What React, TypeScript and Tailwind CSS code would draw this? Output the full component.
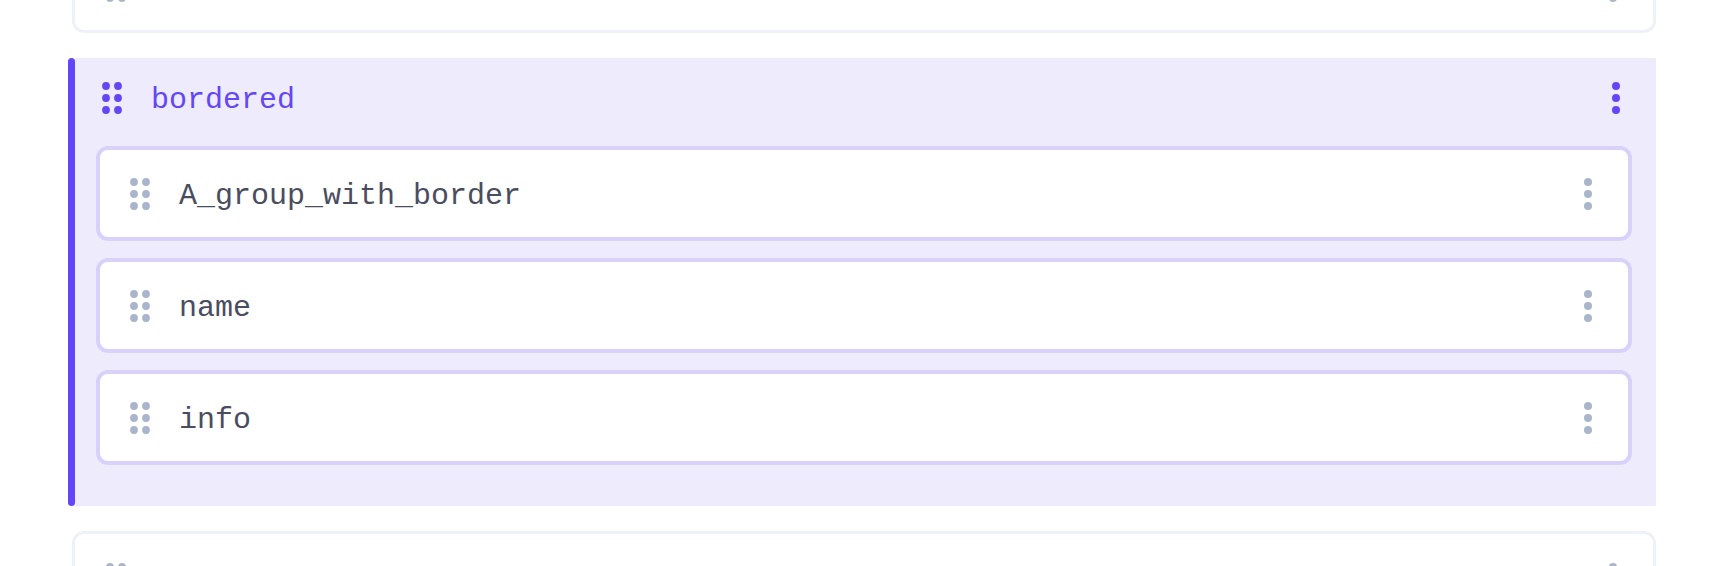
const PURPLE = '#6346f5';

function Grip({ color }: { color: string }) {
    return (
        <svg width="20" height="32" viewBox="0 0 20 32" fill={color} className="shrink-0">
            <circle cx="4" cy="4" r="3.9" />
            <circle cx="16" cy="4" r="3.9" />
            <circle cx="4" cy="16" r="3.9" />
            <circle cx="16" cy="16" r="3.9" />
            <circle cx="4" cy="28" r="3.9" />
            <circle cx="16" cy="28" r="3.9" />
        </svg>
    );
}

function Kebab({ color }: { color: string }) {
    return (
        <svg width="8" height="32" viewBox="0 0 8 32" fill={color} className="shrink-0">
            <circle cx="4" cy="4" r="4" />
            <circle cx="4" cy="16" r="4" />
            <circle cx="4" cy="28" r="4" />
        </svg>
    );
}

function OuterCard({ label }: { label: string }) {
    return (
        <div className="ml-1 h-[95px] flex items-center rounded-xl border-[3px] border-[#eef1f7] bg-white pl-[31px] pr-[36px]">
            <Grip color="#a8b5cb" />
            <span className="ml-[29px] flex-1 pt-1 text-[30px] leading-none text-[#4a4d60]">{label}</span>
            <Kebab color="#a8b5cb" />
        </div>
    );
}

function FieldCard({ label }: { label: string }) {
    return (
        <div className="h-[95px] flex items-center rounded-xl border-4 border-[#d9d1fa] bg-white pl-[30px] pr-[36px]">
            <Grip color="#a8b5cb" />
            <span className="ml-[29px] flex-1 pt-1 text-[30px] leading-none text-[#4a4d60]">{label}</span>
            <Kebab color="#a8b5cb" />
        </div>
    );
}

function Group() {
    const fields = ['A_group_with_border', 'name', 'info'];

    return (
        <div className="flex">
            <div className="w-[7px] shrink-0 rounded-full" style={{ backgroundColor: PURPLE }} />
            <div className="flex-1 bg-[#eeebfd] pl-[21px] pr-[24px] pb-[41px]">
                <div className="h-[80px] flex items-center pl-[6px] pr-[12px]">
                    <Grip color={PURPLE} />
                    <span className="ml-[29px] flex-1 pt-1 text-[30px] leading-none text-[#6346f5]">bordered</span>
                    <Kebab color={PURPLE} />
                </div>
                <div className="mt-2 flex flex-col gap-[17px]">
                    {fields.map((f) => (
                        <FieldCard key={f} label={f} />
                    ))}
                </div>
            </div>
        </div>
    );
}

export default function App() {
    return (
        <div
            className="h-screen overflow-hidden bg-white"
            style={{ fontFamily: '"Liberation Mono", "DejaVu Sans Mono", monospace' }}
        >
            <div className="-mt-[62px] pl-[68px] pr-[64px] flex flex-col gap-[25px]">
                <OuterCard label="title" />
                <Group />
                <OuterCard label="size" />
            </div>
        </div>
    );
}
